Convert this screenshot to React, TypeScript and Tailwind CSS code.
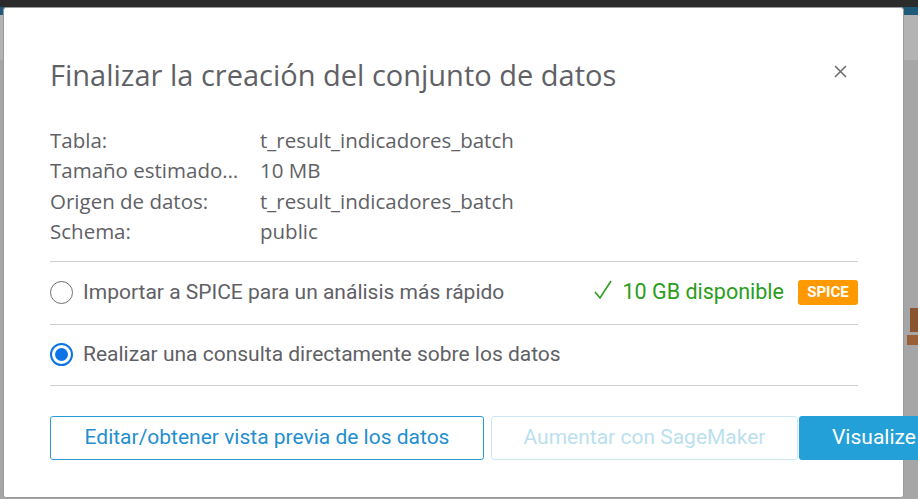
import React from 'react';

const rows = [
  { label: 'Tabla:', value: 't_result_indicadores_batch' },
  { label: 'Tamaño estimado del conjunto de datos:', value: '10 MB' },
  { label: 'Origen de datos:', value: 't_result_indicadores_batch' },
  { label: 'Schema:', value: 'public' },
];

const Radio = ({ checked }: { checked: boolean }) =>
  checked ? (
    <span className="w-[23px] h-[23px] rounded-full border-2 border-[#0a74e6] flex items-center justify-center shrink-0">
      <span className="w-[13px] h-[13px] rounded-full bg-[#0a74e6]" />
    </span>
  ) : (
    <span className="w-[23px] h-[23px] rounded-full border-[1.5px] border-[#6f6f6f] shrink-0" />
  );

const App = () => {
  return (
    <div className="w-[918px] h-[499px] relative overflow-hidden bg-[#a6a6a6]" style={{ fontFamily: 'Roboto, "Open Sans", sans-serif' }}>
      {/* top bar */}
      <div className="h-[7px] bg-[#2b2b2b]" />
      <div className="h-[8px] bg-[#1f5b78]" />
      <div className="h-[45px] bg-[#b3b3b3]" />

      {/* app stuff peeking out from behind the dialog */}
      <div className="absolute right-0 top-[308px] w-[11px] h-[38px]">
        <div className="w-[8px] h-[24px] ml-[3px] bg-[#8a5330]" />
        <div className="w-[11px] h-[10px] mt-[3px] bg-[#9b5f38]" />
      </div>

      {/* dialog */}
      <div className="absolute left-[3px] top-[7px] w-[901px] h-[491px] bg-white rounded-[3px] border border-[#9a9a9a] px-[46px] pt-[48px]">
        <div className="flex items-center justify-between">
          <h1 className="text-[29px] leading-[38px] text-[#5f6166]" style={{ fontFamily: '"Open Sans", sans-serif' }}>
            Finalizar la creación del conjunto de datos
          </h1>
          <button className="w-[16px] h-[16px] mr-[9px] -mt-[8px] flex items-center justify-center">
            <svg width="13" height="13" viewBox="0 0 13 13">
              <path d="M1 1 L12 12 M12 1 L1 12" stroke="#6a6a6a" strokeWidth="1.5" fill="none" />
            </svg>
          </button>
        </div>

        <div className="mt-[31px] text-[20.5px] text-[#5f6166]" style={{ fontFamily: '"Open Sans", sans-serif' }}>
          {rows.map((r) => (
            <div key={r.label} className="flex h-[30.4px] items-center">
              <span className="w-[193px] truncate">{r.label}</span>
              <span className="ml-[17px]">{r.value}</span>
            </div>
          ))}
        </div>

        <div className="mt-[14px] w-[808px] border-t border-[#cfcfcf]">
          <div className="h-[63px] flex items-center border-b border-[#cfcfcf]">
            <Radio checked={false} />
            <span className="ml-[10px] text-[21px] text-[#5f6166]">Importar a SPICE para un análisis más rápido</span>
            <span className="ml-auto text-[21.5px] text-[#2a9d1c] flex items-center">
              <svg width="18" height="20" viewBox="0 0 18 20" className="mr-[11px] -mt-[6px]">
                <path d="M1 12 L6 18 L17 1" stroke="#2a9d1c" strokeWidth="1.6" fill="none" />
              </svg>
              10 GB disponible
            </span>
            <span className="ml-[14px] w-[60px] h-[25px] rounded-[3px] bg-[#ff9900] text-white text-[15px] font-bold flex items-center justify-center">
              SPICE
            </span>
          </div>
          <div className="h-[61px] flex items-center border-b border-[#cfcfcf]">
            <Radio checked={true} />
            <span className="ml-[10px] text-[21px] text-[#5f6166]">Realizar una consulta directamente sobre los datos</span>
          </div>
        </div>

        <div className="mt-[30px] flex">
          <button className="shrink-0 w-[434px] h-[44px] rounded-[3px] border border-[#2a9ad6] text-[#1f8fcf] text-[21px]">
            Editar/obtener vista previa de los datos
          </button>
          <button className="shrink-0 ml-[7px] w-[307px] h-[44px] rounded-[3px] border border-[#cde8f5] text-[#bcdff0] text-[21px]">
            Aumentar con SageMaker
          </button>
          <button className="shrink-0 ml-px w-[150px] h-[44px] rounded-[3px] bg-[#24a0d8] text-white text-[21px] text-left pl-[33px]">
            Visualize
          </button>
        </div>
      </div>
    </div>
  );
};

export default App;
